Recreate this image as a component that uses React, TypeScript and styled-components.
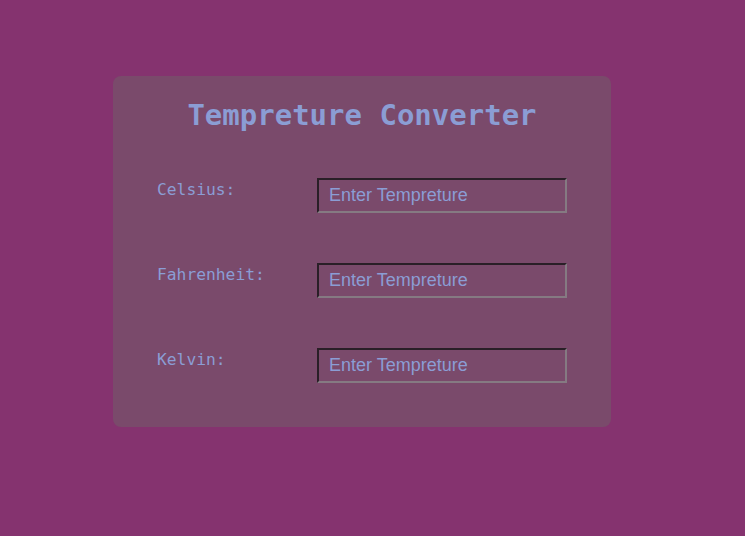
import React from "react";
import styled, { createGlobalStyle } from "styled-components";

const Global = createGlobalStyle`
  html, body { margin: 0; padding: 0; background: #85336f; }
  body { width: 745px; height: 536px; overflow: hidden; }
`;

const Page = styled.div`
  padding: 76px 0 0 113px;
`;

const Card = styled.div`
  width: 498px;
  box-sizing: border-box;
  background: #7a4a6b;
  border-radius: 8px;
  padding: 22px 44px 44px;
  display: flex;
  flex-direction: column;
`;

const Title = styled.h1`
  margin: 0 0 46px;
  text-align: center;
  font-family: "DejaVu Sans Mono", monospace;
  font-weight: bold;
  font-size: 29px;
  line-height: 34px;
  color: #8b9dd4;
`;

const Rows = styled.div`
  display: flex;
  flex-direction: column;
  gap: 50px;
`;

const Row = styled.div`
  display: grid;
  grid-template-columns: 160px 250px;
  align-items: start;
`;

const Label = styled.label`
  font-family: "DejaVu Sans Mono", monospace;
  font-size: 16.3px;
  line-height: 19px;
  padding-top: 2px;
  color: #8b9dd4;
`;

const Input = styled.input`
  width: 250px;
  height: 35px;
  box-sizing: border-box;
  margin: 0;
  padding: 0 10px;
  background: transparent;
  border: 2px solid;
  border-top-color: #2a1f27;
  border-left-color: #2a1f27;
  border-right-color: #857a82;
  border-bottom-color: #857a82;
  font-family: "Liberation Sans", Arial, sans-serif;
  font-size: 18px;
  color: #8b9dd4;
  outline: none;
  &::placeholder { color: #8b9dd4; opacity: 1; }
`;

const fields = ["Celsius:", "Fahrenheit:", "Kelvin:"];

export default function App() {
  return (
    <>
      <Global />
      <Page>
        <Card>
          <Title>Tempreture Converter</Title>
          <Rows>
            {fields.map((f) => (
              <Row key={f}>
                <Label>{f}</Label>
                <Input placeholder="Enter Tempreture" />
              </Row>
            ))}
          </Rows>
        </Card>
      </Page>
    </>
  );
}
